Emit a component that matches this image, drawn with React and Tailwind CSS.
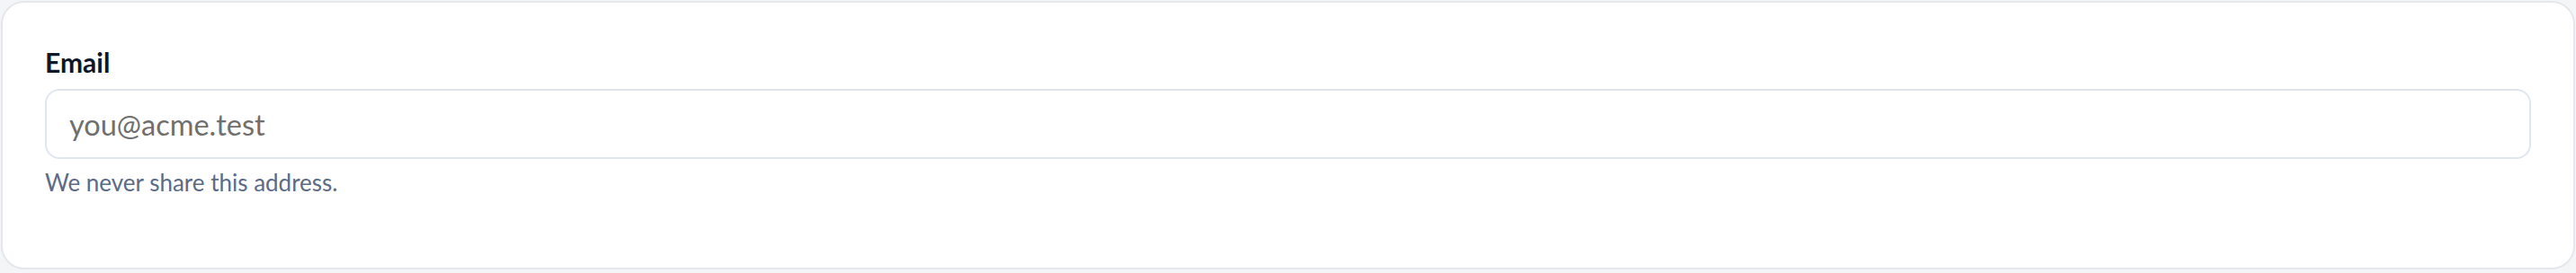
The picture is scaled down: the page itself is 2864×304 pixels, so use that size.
export default function App() {
  return (
    <div
      className="h-[304px] w-full bg-[#f4f5f7] p-px"
      style={{ fontFamily: "Lato, 'Noto Sans', sans-serif" }}
    >
      <div className="h-[299px] rounded-[26px] border-2 border-[#e6e7ec] bg-white px-[47px] pt-[47px]">
        <label htmlFor="email" className="block text-[30px] leading-[38px] font-bold text-[#0f172a]">
          Email
        </label>
        <input
          id="email"
          type="email"
          placeholder="you@acme.test"
          className="mt-[11px] block h-[78px] w-full rounded-2xl border-2 border-[#e0e6ef] bg-white px-[25px] text-[32.5px] text-[#0f172a] outline-none placeholder:text-[#6f6f6f]"
        />
        <p className="mt-2 text-[26px] leading-[36px] text-[#5b6b86]">We never share this address.</p>
      </div>
    </div>
  );
}
